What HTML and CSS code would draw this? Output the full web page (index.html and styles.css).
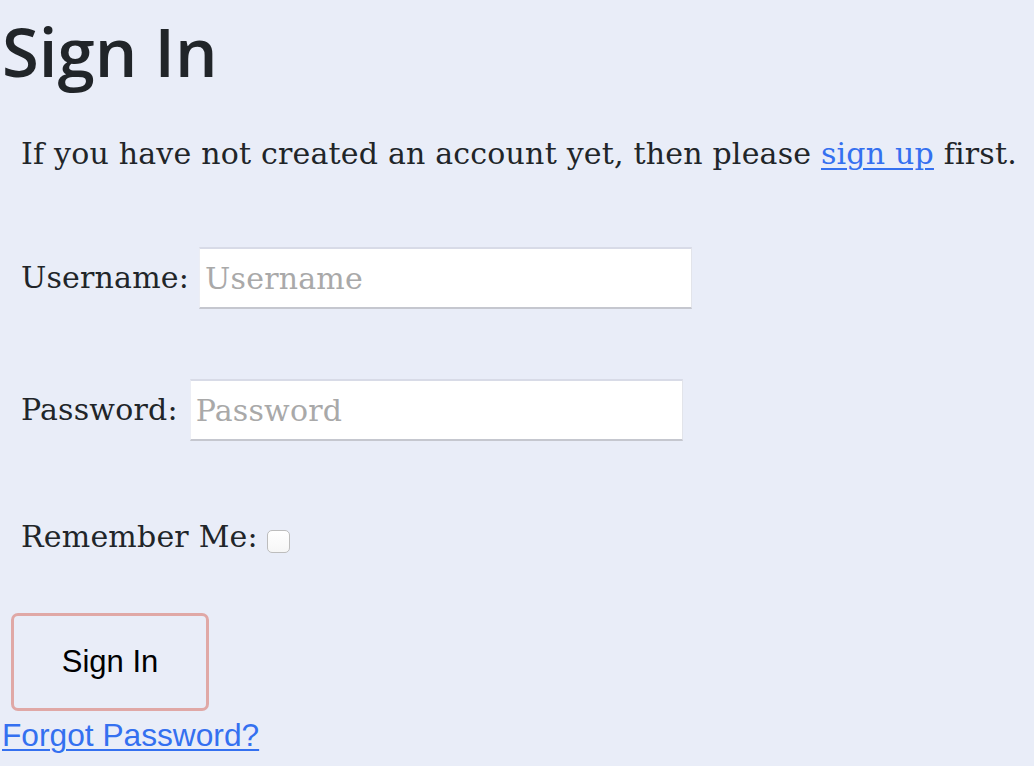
FILE: index.html
```html
<!DOCTYPE html>
<html lang="en">
<head>
<meta charset="utf-8">
<title>Sign In</title>
<link rel="stylesheet" href="styles.css">
</head>
<body>
<main class="page">
  <h1 class="title">Sign In</h1>
  <p class="intro">If you have not created an account yet, then please <a class="link" href="#">sign up</a> first.</p>
  <form class="form">
    <div class="row row-user">
      <label class="label" for="u">Username:</label>
      <input class="field" id="u" type="text" placeholder="Username">
    </div>
    <div class="row row-pass">
      <label class="label" for="p">Password:</label>
      <input class="field" id="p" type="password" placeholder="Password">
    </div>
    <div class="row row-remember">
      <label class="label" for="r">Remember Me:</label>
      <span class="check" id="r"></span>
    </div>
    <button class="btn" type="button">Sign In</button>
  </form>
  <a class="forgot" href="#">Forgot Password?</a>
</main>
</body>
</html>
```

FILE: styles.css
```css
html, body {
  margin: 0;
  padding: 0;
  background: #e9edf8;
}
body {
  color: #212529;
  font-family: "DejaVu Serif", serif;
}
.page {
  display: flex;
  flex-direction: column;
  align-items: flex-start;
  height: 766px;
  overflow: hidden;
}
.title {
  margin: 0;
  padding: 4px 0 0 2px;
  font-family: "Open Sans", sans-serif;
  font-weight: 600;
  font-size: 67px;
  line-height: 94px;
  color: #212529;
}
.intro {
  margin: 32px 0 0 21px;
  font-size: 30px;
  line-height: 48px;
  letter-spacing: 0.2px;
}
.link {
  color: #3470f0;
  text-decoration: underline;
  text-decoration-thickness: 2px;
  text-underline-offset: 4px;
}
.form {
  display: flex;
  flex-direction: column;
  align-items: flex-start;
}
.row {
  display: flex;
  align-items: center;
  margin-left: 21px;
}
.row-user { margin-top: 69px; gap: 10px; }
.row-pass { margin-top: 70px; gap: 12px; }
.row-remember { margin-top: 76px; gap: 9px; }
.label {
  font-size: 30px;
  letter-spacing: 0.2px;
  line-height: 40px;
}
.field {
  box-sizing: border-box;
  width: 493px;
  height: 62px;
  margin: 0;
  padding: 0 5px;
  background: #fff;
  border: none;
  border-top: 2px solid #d8dbe7;
  border-left: 1px solid #eceef5;
  border-right: 1px solid #e2e4ea;
  border-bottom: 2px solid #c5c7cf;
  font-family: "DejaVu Serif", serif;
  font-size: 30px;
  letter-spacing: 0.2px;
  color: #212529;
  outline: none;
}
.field::placeholder {
  color: #a9a9a9;
}
.check {
  display: block;
  box-sizing: border-box;
  width: 23px;
  height: 23px;
  margin-top: 8px;
  border: 1.5px solid #bdbdbd;
  border-radius: 5px;
  background: linear-gradient(#ffffff, #f6f6f6);
}
.btn {
  box-sizing: border-box;
  margin: 56px 0 0 11px;
  width: 198px;
  height: 98px;
  padding: 0;
  background: transparent;
  border: 3px solid #e0a8a6;
  border-radius: 7px;
  font-family: "Liberation Sans", Arial, sans-serif;
  font-size: 31px;
  color: #000;
}
.forgot {
  margin: 6px 0 0 2px;
  font-family: "Liberation Sans", Arial, sans-serif;
  font-size: 31.7px;
  line-height: 37px;
  color: #3470f0;
  text-decoration-thickness: 2px;
  text-underline-offset: 3px;
}
```
